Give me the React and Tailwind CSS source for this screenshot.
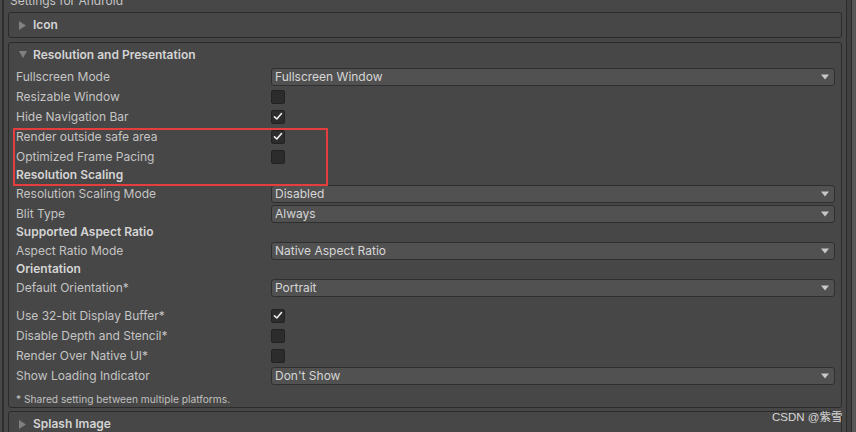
import React from "react";

const font = "font-['Inter','Liberation_Sans','Noto_Sans_CJK_SC',sans-serif]";

const Check = ({ on }) => (
  <div className="w-[14px] h-[14px] rounded-[2px] bg-[#2c2c2c] border border-[#222] flex items-center justify-center">
    {on && (
      <svg width="10" height="9" viewBox="0 0 10 9">
        <polyline points="1.5,4.8 3.8,7 8.5,1.5" fill="none" stroke="#ececec" strokeWidth="1.6" strokeLinecap="round" strokeLinejoin="round" />
      </svg>
    )}
  </div>
);

const Dropdown = ({ value }) => (
  <div className="flex-1 h-[18px] rounded-[3px] bg-[#515151] border border-[#2f2f2f] flex items-center justify-between pl-[3px] pr-[5px]">
    <span className="text-[12px] text-[#d6d6d6] leading-none">{value}</span>
    <svg width="8" height="6" viewBox="0 0 8 6">
      <polygon points="0,0.5 8,0.5 4,5.5" fill="#c8c8c8" />
    </svg>
  </div>
);

const Row = ({ label, children }) => (
  <div className="flex h-[20px] shrink-0 items-center pt-[1px]">
    <div className="w-[255px] shrink-0 text-[12px] text-[#c4c4c4] whitespace-nowrap">{label}</div>
    {children}
  </div>
);

const Header = ({ label }) => (
  <div className="h-[17px] shrink-0 flex items-center text-[12px] font-semibold text-[#d4d4d4]">{label}</div>
);

const Foldout = ({ open, title }) => (
  <div className="h-[24px] flex items-center pl-[10px] gap-[6px]">
    <svg width="8" height="9" viewBox="0 0 8 9">
      {open ? (
        <polygon points="0,1 8,1 4,8" fill="#808080" />
      ) : (
        <polygon points="0,0 7,4.5 0,9" fill="#808080" />
      )}
    </svg>
    <span className="text-[12px] font-semibold text-[#d4d4d4]">{title}</span>
  </div>
);

export default function App() {
  return (
    <div className={`w-[856px] h-[432px] overflow-hidden bg-[#474747] flex relative ${font}`}>
      <div className="w-[2px] shrink-0 bg-[#474747]" />
      <div className="w-[2px] shrink-0 bg-[#2e2e2e]" />
      <div className="flex-1 flex flex-col pl-[4px] pr-[4px]">
        <div className="h-[12px] shrink-0 pl-[2px]">
          <div className="-mt-[7px] text-[12px] leading-[16px] text-[#c4c4c4]">Settings for Android</div>
        </div>
        <div className="shrink-0 border border-[#2b2b2b] rounded-[3px]">
          <Foldout title="Icon" />
        </div>
        <div className="shrink-0 mt-[4px] border border-[#2b2b2b] rounded-[3px] flex flex-col">
          <div className="h-[23px] flex items-center">
            <Foldout open title="Resolution and Presentation" />
          </div>
          <div className="pl-[7px] pr-[6px] flex flex-col">
            <Row label="Fullscreen Mode"><Dropdown value="Fullscreen Window" /></Row>
            <Row label="Resizable Window"><Check /></Row>
            <Row label="Hide Navigation Bar"><Check on /></Row>
            <Row label="Render outside safe area"><Check on /></Row>
            <Row label="Optimized Frame Pacing"><Check /></Row>
            <Header label="Resolution Scaling" />
            <Row label="Resolution Scaling Mode"><Dropdown value="Disabled" /></Row>
            <Row label="Blit Type"><Dropdown value="Always" /></Row>
            <Header label="Supported Aspect Ratio" />
            <Row label="Aspect Ratio Mode"><Dropdown value="Native Aspect Ratio" /></Row>
            <Header label="Orientation" />
            <Row label="Default Orientation*"><Dropdown value="Portrait" /></Row>
            <div className="h-[8px] shrink-0" />
            <Row label="Use 32-bit Display Buffer*"><Check on /></Row>
            <Row label="Disable Depth and Stencil*"><Check /></Row>
            <Row label="Render Over Native UI*"><Check /></Row>
            <Row label="Show Loading Indicator"><Dropdown value="Don't Show" /></Row>
            <div className="mt-[7px] h-[15px] shrink-0 flex items-center text-[10.2px] text-[#c0c0c0]">
              * Shared setting between multiple platforms.
            </div>
          </div>
        </div>
        <div className="shrink-0 mt-[3px] border border-[#2b2b2b] rounded-[3px]">
          <Foldout title="Splash Image" />
        </div>
      </div>
      <div className="w-[1px] shrink-0 bg-[#2c2c2c]" />
      <div className="w-[4px] shrink-0 bg-[#404040]" />
      <div className="w-[1px] shrink-0 bg-[#2c2c2c]" />
      <div className="w-[4px] shrink-0 bg-[#575757]" />

      <div className="absolute left-[13px] top-[128px] w-[315px] h-[58px] border-2 border-[#e63d3d]" />
      <div className="absolute left-[772px] top-[409px] text-[11.5px] text-[#d6d6d6] leading-[16px] font-['Liberation_Sans','Noto_Sans_CJK_SC',sans-serif]">
        CSDN @紫雪
      </div>
    </div>
  );
}
